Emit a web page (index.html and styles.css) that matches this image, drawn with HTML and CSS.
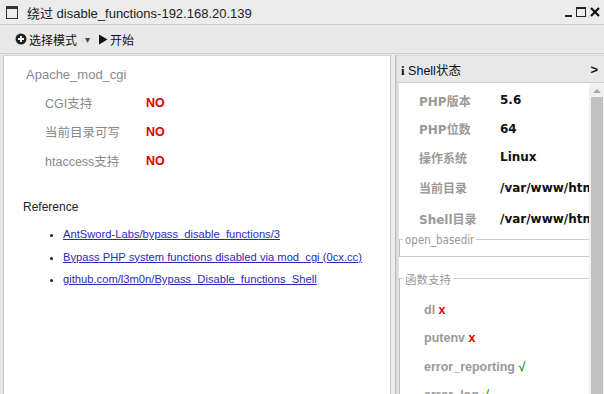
FILE: index.html
```html
<!DOCTYPE html>
<html>
<head>
<meta charset="utf-8">
<link rel="stylesheet" href="styles.css">
</head>
<body>
<div class="window">
  <div class="titlebar">
    <span class="win-icon"></span>
    <span class="title">绕过 disable_functions-192.168.20.139</span>
    <span class="controls">
      <span class="ctl-min"></span>
      <span class="ctl-max"></span>
      <svg class="ctl-close" width="10" height="10" viewBox="0 0 10 10"><path d="M1 1L9 9M9 1L1 9" stroke="#111" stroke-width="2.2"/></svg>
    </span>
  </div>
  <div class="toolbar">
    <span class="tb-item"><svg width="12" height="12" viewBox="0 0 12 12"><circle cx="6" cy="6" r="5.5" fill="#222"/><path d="M6 3v6M3 6h6" stroke="#fff" stroke-width="1.8"/></svg>选择模式</span>
    <span class="caret">▾</span>
    <span class="tb-item"><svg width="10" height="11" viewBox="0 0 10 11"><path d="M1 0.5L9.5 5.5L1 10.5Z" fill="#111"/></svg>开始</span>
  </div>
  <div class="main">
    <div class="left">
      <div class="section-title">Apache_mod_cgi</div>
      <div class="checks">
        <div class="check"><span class="ck-label">CGI支持</span><span class="no">NO</span></div>
        <div class="check"><span class="ck-label">当前目录可写</span><span class="no">NO</span></div>
        <div class="check"><span class="ck-label">htaccess支持</span><span class="no">NO</span></div>
      </div>
      <div class="ref-title">Reference</div>
      <ul class="refs">
        <li><a href="#">AntSword-Labs/bypass_disable_functions/3</a></li>
        <li><a href="#">Bypass PHP system functions disabled via mod_cgi (0cx.cc)</a></li>
        <li><a href="#">github.com/l3m0n/Bypass_Disable_functions_Shell</a></li>
      </ul>
    </div>
    <div class="splitter"></div>
    <div class="right">
      <div class="rhead"><span class="rtitle"><b class="info">i</b> Shell状态</span><span class="chev">&gt;</span></div>
      <div class="rbody">
        <div class="rcontent">
          <div class="kv"><span class="k">PHP版本</span><span class="v">5.6</span></div>
          <div class="kv"><span class="k">PHP位数</span><span class="v">64</span></div>
          <div class="kv"><span class="k">操作系统</span><span class="v">Linux</span></div>
          <div class="kv kv-tall"><span class="k">当前目录</span><span class="v">/var/www/html</span></div>
          <div class="kv kv-tall"><span class="k">Shell目录</span><span class="v">/var/www/html</span></div>
          <fieldset class="fs fs-open"><legend>open_basedir</legend></fieldset>
          <fieldset class="fs fs-func"><legend>函数支持</legend>
            <div class="fn-list">
              <div class="fn">dl <span class="x">x</span></div>
              <div class="fn">putenv <span class="x">x</span></div>
              <div class="fn">error_reporting <span class="ok">√</span></div>
              <div class="fn">error_log <span class="ok">√</span></div>
            </div>
          </fieldset>
        </div>
        <div class="scrollbar"><span class="arrow"></span><span class="thumb"></span></div>
      </div>
    </div>
  </div>
</div>
</body>
</html>
```
FILE: styles.css
```css
html, body { margin: 0; padding: 0; }
body {
  width: 604px; height: 394px; overflow: hidden;
  font-family: "DejaVu Sans", "Liberation Sans", "Noto Sans CJK SC", sans-serif;
  font-size: 12px; color: #222; background: #e6e6e6;
}
.window { display: flex; flex-direction: column; height: 394px; }
.titlebar {
  height: 24px; flex: none; display: flex; align-items: center;
  background: #ececec; border-bottom: 1px solid #c9c9c9; padding: 0 4px 0 6px;
}
.win-icon {
  width: 10px; height: 9px; border: 1px solid #333; border-top-width: 3px; margin-right: 9px;
}
.title { font-size: 13px; color: #222; flex: 1; font-family: "Liberation Sans", "Noto Sans CJK SC", sans-serif; }
.controls { display: flex; align-items: center; gap: 4px; }
.ctl-min { width: 7px; height: 2px; background: #222; margin-top: 7px; }
.ctl-max { width: 8px; height: 7px; border: 1px solid #222; border-top-width: 2px; }
.toolbar {
  height: 28px; flex: none; display: flex; align-items: center; gap: 8px;
  background: #e9e9e9; border-bottom: 1px solid #cfcfcf; padding-left: 15px;
  font-family: "Liberation Sans", "Noto Sans CJK SC", sans-serif; font-size: 12px; color: #111;
}
.tb-item { display: flex; align-items: center; gap: 2px; }
.caret { font-size: 10px; color: #444; margin: 0 0 0 0; }
.main { flex: 1; display: flex; min-height: 0; padding-top: 1px; }
.left {
  width: 386px; margin-left: 3px; background: #fff;
  border-left: 1px solid #c4c4c4; border-right: 1px solid #c8c8c8; border-top: 1px solid #d6d6d6;
  font-family: "Liberation Sans", "Noto Sans CJK SC", sans-serif;
}
.section-title { color: #8a8a8a; font-size: 13px; margin: 11px 0 0 22px; }
.checks { margin: 6px 0 0 41px; }
.check { display: flex; height: 29px; align-items: center; font-size: 12.5px; color: #888; }
.ck-label { width: 101px; }
.no { color: #e00000; font-weight: bold; }
.ref-title { margin: 25px 0 0 19px; font-size: 12px; color: #222; }
.refs { margin: 11px 0 0; padding-left: 59px; }
.refs li { height: 22.5px; line-height: 18px; font-size: 11.2px; }
.refs a { color: #2a2ab8; text-decoration: underline; }
.splitter { width: 4px; background: #ececec; border-right: 1px solid #bdbdbd; }
.right { flex: 1; display: flex; flex-direction: column; background: #fff; border-left: 1px solid #d6d6d6; }
.rhead {
  height: 26px; flex: none; display: flex; align-items: center; justify-content: space-between;
  background: #e8e8e8; border-bottom: 1px solid #cfcfcf; border-top: 1px solid #dadada; padding: 0 6px 0 4px;
  font-family: "Liberation Sans", "Noto Sans CJK SC", sans-serif; font-size: 12.5px; color: #111;
}
.info { font-family: "Liberation Serif", serif; font-size: 13px; }
.chev { font-weight: bold; font-size: 13px; }
.rbody { flex: 1; display: flex; min-height: 0; border-left: 2px solid #e0e0e0; }
.rcontent { flex: 1; overflow: hidden; padding-top: 3px; }
.kv { display: flex; height: 28.5px; align-items: center; font-weight: bold; }
.kv-tall { height: 30px; padding-top: 1px; }
.k { width: 81px; padding-left: 20px; color: #9a9a9a; font-size: 12px; }
.v { color: #111; font-size: 12px; white-space: nowrap; overflow: hidden; width: 89px; font-family: "DejaVu Sans", sans-serif; }
.fs { border: 0; border-top: 1px solid #d0d0d0; border-left: 1px solid #bdbdbd; margin: 0; padding: 0; }
.fs legend { padding: 0 2px; margin-left: 3px; color: #999; font-size: 11.5px; font-family: "DejaVu Sans Condensed", "DejaVu Sans", "Noto Sans CJK SC", sans-serif; }
.fs-open { height: 22px; border-bottom: 1px solid #c8c8c8; margin-top: -1px; }
.fs-func { margin-top: 14px; }
.fn-list { padding: 13px 0 0 24px; }
.fn { height: 28.5px; line-height: 20px; font-weight: bold; color: #999; font-size: 12.5px; font-family: "Liberation Sans", sans-serif; }
.x { color: #e00000; }
.ok { color: #1a9a1a; }
.scrollbar { width: 15px; background: #f0f0f0; display: flex; flex-direction: column; align-items: center; }
.arrow { width: 0; height: 0; border: 4px solid transparent; border-bottom: 4px solid #aaa; border-top: 0; margin: 6px 0 4px; }
.thumb { width: 12px; flex: 1; background: #c1c1c1; }
```
